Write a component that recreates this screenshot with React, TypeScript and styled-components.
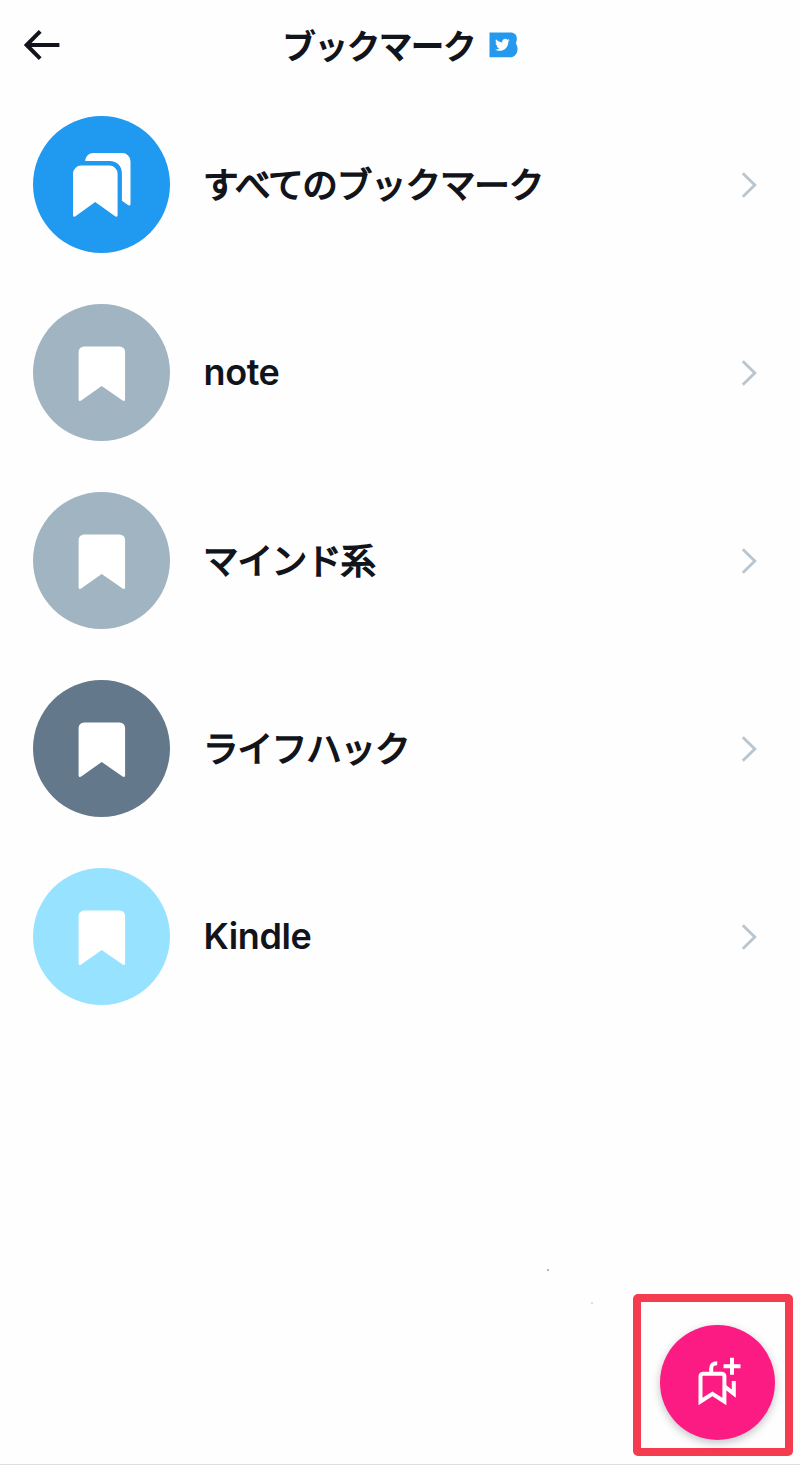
import React from "react";
import styled, { createGlobalStyle } from "styled-components";

const GlobalStyle = createGlobalStyle`
  * { box-sizing: border-box; }
  body {
    margin: 0;
    background: #fefefe;
    color: #11141a;
    font-family: Inter, "Noto Sans CJK JP", sans-serif;
  }
`;

const Screen = styled.div`
  position: relative;
  display: flex;
  flex-direction: column;
  width: 800px;
  height: 1465px;
  overflow: hidden;
  border-bottom: 1px solid #dcdfe1;
`;

const Header = styled.header`
  display: grid;
  grid-template-columns: 60px 1fr 60px;
  align-items: center;
  height: 90px;
`;

const BackButton = styled.button`
  display: flex;
  padding: 0 0 0 22px;
  border: 0;
  background: none;
`;

const TitleGroup = styled.div`
  display: flex;
  align-items: center;
  justify-content: center;
  gap: 14px;
`;

const Title = styled.h1`
  margin: 0;
  padding-top: 3px;
  font-size: 34px;
  line-height: 44px;
  font-weight: 700;
  letter-spacing: -1.9px;
  white-space: nowrap;
`;

const List = styled.ul`
  display: flex;
  flex-direction: column;
  margin: 0;
  padding: 0;
  list-style: none;
`;

const Row = styled.li`
  display: flex;
  align-items: center;
  height: 188.1px;
  padding: 1px 42px 0 33px;
`;

const Avatar = styled.div<{ $color: string }>`
  display: flex;
  flex: none;
  width: 137px;
  height: 137px;
  border-radius: 50%;
  background: ${(p) => p.$color};
`;

const Label = styled.span<{ $latin?: boolean }>`
  flex: 1;
  margin-left: ${(p) => (p.$latin ? 33.5 : 33)}px;
  padding-top: ${(p) => (p.$latin ? 0 : 2)}px;
  padding-bottom: ${(p) => (p.$latin ? 2 : 0)}px;
  font-size: ${(p) => (p.$latin ? 36 : 35.5)}px;
  line-height: 48px;
  font-weight: ${(p) => (p.$latin ? 600 : 400)};
  letter-spacing: ${(p) => (p.$latin ? -0.4 : -1.1)}px;
  -webkit-text-stroke: ${(p) => (p.$latin ? 0 : 1.5)}px #11141a;
  white-space: nowrap;
`;

const Highlight = styled.div`
  position: absolute;
  left: 633px;
  top: 1294px;
  display: flex;
  width: 160px;
  height: 162px;
  padding: 23px 0 0 19px;
  border: 8px solid #f43b50;
  border-radius: 5px;
`;

const ComposeButton = styled.button`
  display: flex;
  width: 115px;
  height: 115px;
  padding: 0;
  border: 0;
  border-radius: 50%;
  background: #fc1b83;
  box-shadow: 0 3px 9px rgba(40, 40, 60, 0.28);
`;

const Speck = styled.i<{ $x: number; $y: number; $tone: string }>`
  position: absolute;
  left: ${(p) => p.$x}px;
  top: ${(p) => p.$y}px;
  width: 2px;
  height: 2px;
  background: ${(p) => p.$tone};
`;

const BackArrow = () => (
  <svg width="38" height="34" viewBox="0 0 38 34" fill="none" stroke="#11141a" strokeWidth="4">
    <path d="M37.4 17H5M18.2 3.3 4.6 17l13.6 13.7" />
  </svg>
);

const BlueBadge = () => (
  <svg width="29" height="26" viewBox="0 0 29 26">
    <path d="M.5.5H21.5c4.200 0 6.600 2.800 6.300 6.600-.1 1.900-.4 3-.9 4.300 1 1.400 1.600 3.300 1.600 5.500 0 5-3.100 8.400-7.500 8.400H.5z" fill="#2499ee" />
    <path
      transform="translate(5.4 5) scale(.65)"
      fill="#fff"
      d="M23.643 4.937c-.835.37-1.732.62-2.675.733.962-.576 1.7-1.49 2.048-2.578-.9.534-1.897.922-2.958 1.13-.85-.904-2.06-1.47-3.4-1.47-2.572 0-4.658 2.086-4.658 4.66 0 .364.042.718.12 1.06-3.873-.195-7.304-2.05-9.602-4.868-.4.69-.63 1.49-.63 2.342 0 1.616.823 3.043 2.072 3.878-.764-.025-1.482-.234-2.11-.583v.06c0 2.257 1.605 4.14 3.737 4.568-.392.106-.803.162-1.227.162-.3 0-.593-.028-.877-.082.593 1.85 2.313 3.198 4.352 3.234-1.595 1.25-3.604 1.995-5.786 1.995-.376 0-.747-.022-1.112-.065 2.062 1.323 4.51 2.093 7.14 2.093 8.57 0 13.255-7.098 13.255-13.254 0-.2-.005-.402-.014-.602.91-.658 1.7-1.477 2.323-2.41z"
    />
  </svg>
);

const BookmarkIcon = () => (
  <svg width="137" height="137" viewBox="0 0 137 137" fill="#fff">
    <path d="M51 42.500h35.700a5.400 5.400 0 0 1 5.400 5.400v47.300c0 1.800-1.200 2.300-2.500 1.400L68.700 82 48.200 96.600c-1.400.9-2.600.4-2.600-1.400V47.900a5.400 5.400 0 0 1 5.400-5.400z" />
  </svg>
);

const BookmarkStackIcon = () => (
  <svg width="137" height="137" viewBox="0 0 137 137" fill="#fff">
    <path d="M48.2 49.500h28.200a8.200 8.200 0 0 1 8.200 8.200v41.200c0 1.800-1.200 2.300-2.500 1.400L62.200 86 42.500 100.300c-1.300.9-2.500.4-2.500-1.400V57.700a8.200 8.200 0 0 1 8.200-8.200z" />
    <path d="M52.200 45C52.500 40.400 56 37 60.500 37h28.800a8.200 8.200 0 0 1 8.200 8.200v42.700c0 1.500-1.200 2.100-2.500 1.200l-6.100-4.300V57.400c0-7.500-4.800-12.400-12.300-12.400z" />
  </svg>
);

const Chevron = () => (
  <svg width="18" height="28" viewBox="0 0 18 28" fill="none" stroke="#bac6cf" strokeWidth="2.9">
    <path d="M2.8 2.200 14.800 14 2.800 25.800" />
  </svg>
);

const AddBookmarkIcon = () => (
  <svg width="115" height="115" viewBox="0 0 115 115" fill="none" stroke="#fff" strokeWidth="4">
    <path d="M40.500 51.300a2.500 2.500 0 0 1 2.500-2.500h18.900a2.500 2.500 0 0 1 2.500 2.500v25.200l-12-7.600-11.900 7.600z" />
    <path d="M51.200 48.800V43.500c0-3.800 1.800-5.300 6-5.300" />
    <path d="M64.400 61.400 73.800 68.700V56" />
    <path d="M72 32.700v17M63.500 41.300h17" />
  </svg>
);

const folders = [
  { name: "すべてのブックマーク", color: "#2099f1", stacked: true },
  { name: "note", color: "#a0b4c1", latin: true },
  { name: "マインド系", color: "#a0b4c1" },
  { name: "ライフハック", color: "#64788b" },
  { name: "Kindle", color: "#97e3ff", latin: true },
];

export default function App() {
  return (
    <Screen>
      <GlobalStyle />
      <Header>
        <BackButton aria-label="戻る">
          <BackArrow />
        </BackButton>
        <TitleGroup>
          <Title>ブックマーク</Title>
          <BlueBadge />
        </TitleGroup>
      </Header>
      <List>
        {folders.map((folder) => (
          <Row key={folder.name}>
            <Avatar $color={folder.color}>{folder.stacked ? <BookmarkStackIcon /> : <BookmarkIcon />}</Avatar>
            <Label $latin={folder.latin}>{folder.name}</Label>
            <Chevron />
          </Row>
        ))}
      </List>
      <Speck $x={547} $y={1269} $tone="#b5b5b5" />
      <Speck $x={591} $y={1302} $tone="#dedede" />
      <Highlight>
        <ComposeButton aria-label="フォルダを追加">
          <AddBookmarkIcon />
        </ComposeButton>
      </Highlight>
    </Screen>
  );
}
